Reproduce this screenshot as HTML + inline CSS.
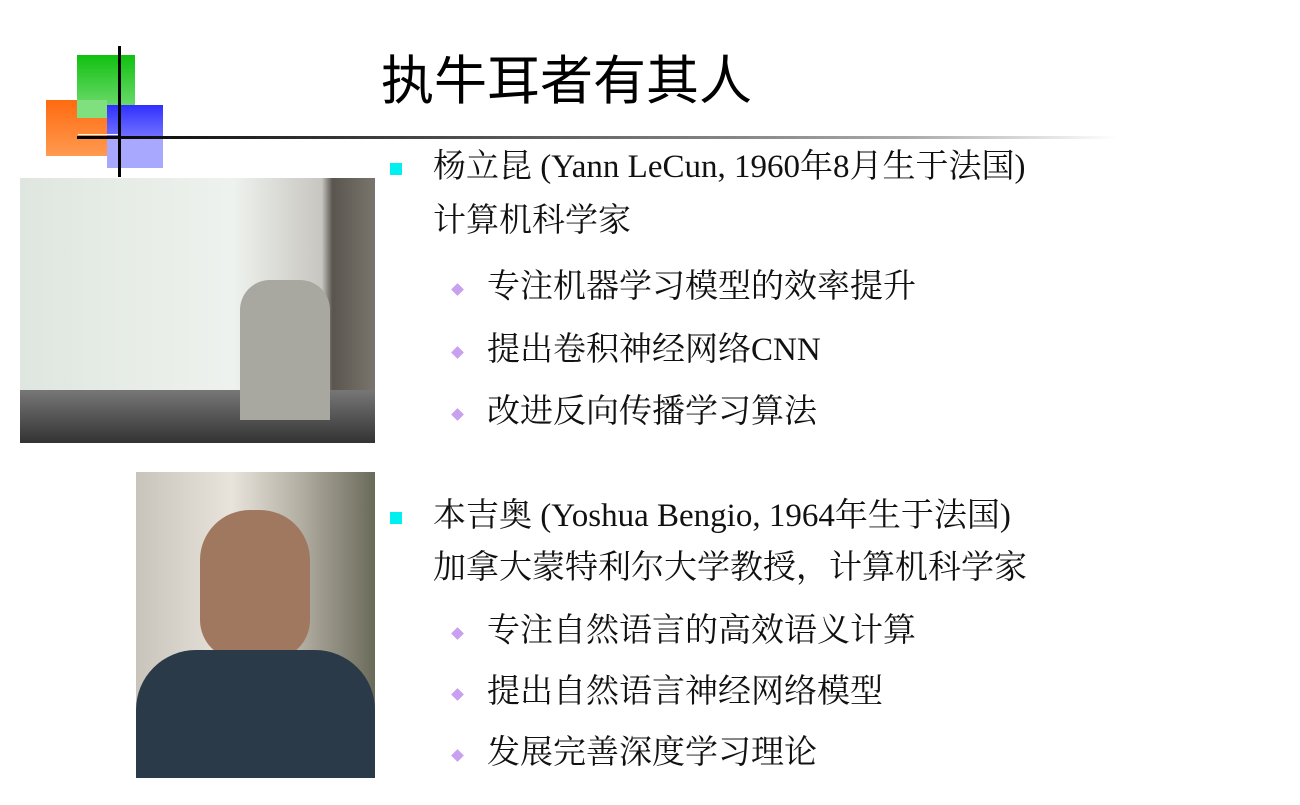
<!DOCTYPE html>
<html><head><meta charset="utf-8"><style>
body{margin:0;width:1300px;height:805px;background:#fff;position:relative;overflow:hidden;font-family:"Liberation Serif","Noto Serif CJK SC",serif;color:#111}
.a{position:absolute}
.t{font-size:33px;white-space:nowrap;line-height:38px}
.sq{width:12px;height:12px;background:#00f0f0}
.dm{width:9px;height:9px;background:#c8a0f0;transform:rotate(45deg)}
</style></head><body>
<div class="a" style="left:77px;top:55px;width:58px;height:63px;background:linear-gradient(#10c010,#80e080)"></div>
<div class="a" style="left:46px;top:100px;width:61px;height:56px;background:linear-gradient(#ff6a10,#ff9a50)"></div>
<div class="a" style="left:77px;top:100px;width:30px;height:18px;background:#80e080"></div>
<div class="a" style="left:107px;top:105px;width:56px;height:63px;background:linear-gradient(#3030ff 0%,#7070ff 50%,#a8a8ff 52%,#a8a8ff)"></div>
<div class="a" style="left:118px;top:46px;width:3px;height:131px;background:#000"></div>
<div class="a" style="left:77px;top:136px;width:1040px;height:3px;background:linear-gradient(90deg,#000,#555 40%,#aaa 80%,#fff)"></div>
<div class="a" style="left:78px;top:134px;width:40px;height:1px;background:#fff"></div>
<div class="a" style="left:381px;top:50px;font-family:'Liberation Sans','Noto Sans CJK SC',sans-serif;font-size:53px;line-height:64px;color:#000">执牛耳者有其人</div>
<div class="a" style="left:20px;top:178px;width:355px;height:265px;background:linear-gradient(90deg,#dfe6df 0%,#eef2ee 60%,#c8c6c0 85%,#5a554e 88%,#7a756c 100%)"></div>
<div class="a" style="left:20px;top:390px;width:355px;height:53px;background:linear-gradient(#777,#333)"></div>
<div class="a" style="left:240px;top:280px;width:90px;height:140px;background:#a8a8a0;border-radius:30px 30px 0 0"></div>
<div class="a" style="left:136px;top:472px;width:239px;height:306px;background:linear-gradient(90deg,#c8c4bc,#e8e4dc 40%,#b0aca0 70%,#6a6a5a)"></div>
<div class="a" style="left:200px;top:510px;width:110px;height:150px;background:#a07860;border-radius:50px 50px 40px 40px"></div>
<div class="a" style="left:136px;top:650px;width:239px;height:128px;background:#2a3a48;border-radius:60px 60px 0 0"></div>
<div class="a sq" style="left:390px;top:163px"></div>
<div class="a t" style="left:433px;top:148px">杨立昆 (Yann LeCun, 1960年8月生于法国)</div>
<div class="a t" style="left:433px;top:202px">计算机科学家</div>
<div class="a dm" style="left:453px;top:285px"></div><div class="a t" style="left:487px;top:268px">专注机器学习模型的效率提升</div>
<div class="a dm" style="left:453px;top:348px"></div><div class="a t" style="left:487px;top:331px">提出卷积神经网络CNN</div>
<div class="a dm" style="left:453px;top:410px"></div><div class="a t" style="left:487px;top:393px">改进反向传播学习算法</div>
<div class="a sq" style="left:390px;top:512px"></div>
<div class="a t" style="left:433px;top:497px">本吉奥 (Yoshua Bengio, 1964年生于法国)</div>
<div class="a t" style="left:433px;top:549px">加拿大蒙特利尔大学教授，计算机科学家</div>
<div class="a dm" style="left:453px;top:629px"></div><div class="a t" style="left:487px;top:612px">专注自然语言的高效语义计算</div>
<div class="a dm" style="left:453px;top:690px"></div><div class="a t" style="left:487px;top:673px">提出自然语言神经网络模型</div>
<div class="a dm" style="left:453px;top:751px"></div><div class="a t" style="left:487px;top:734px">发展完善深度学习理论</div>
</body></html>
